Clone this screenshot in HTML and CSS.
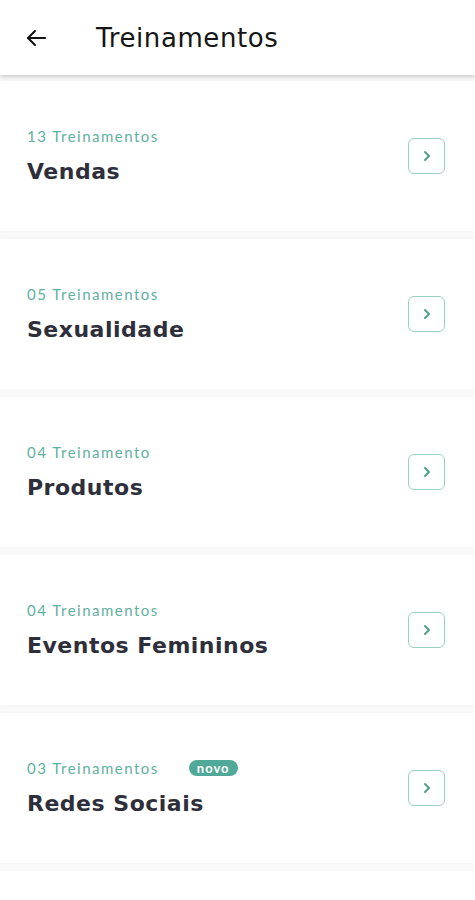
FILE: index.html
```html
<!DOCTYPE html>
<html lang="pt-BR">
<head>
    <meta charset="UTF-8">
    <meta name="viewport" content="width=475, initial-scale=1.0">
    <title>Treinamentos</title>
    <link rel="stylesheet" href="styles.css">
</head>
<body>
    <header class="topbar">
        <a href="#" class="back-btn" aria-label="Voltar">
            <svg width="24" height="24" viewBox="0 0 24 24" fill="none" stroke="#111" stroke-width="2" stroke-linecap="round" stroke-linejoin="round">
                <path d="M21 12H4"/>
                <path d="M11 5l-7 7 7 7"/>
            </svg>
        </a>
        <h1>Treinamentos</h1>
    </header>

    <main class="list">
        <!-- Categorias de treinamento -->
        <a href="#" class="card">
            <div class="card-text">
                <p class="count">13 Treinamentos</p>
                <h2>Vendas</h2>
            </div>
            <span class="go-btn">
                <svg width="14" height="14" viewBox="0 0 14 14" fill="none" stroke="#4f9f8e" stroke-width="2" stroke-linecap="round" stroke-linejoin="round"><path d="M5 3l4 4-4 4"/></svg>
            </span>
        </a>
        <a href="#" class="card">
            <div class="card-text">
                <p class="count">05 Treinamentos</p>
                <h2>Sexualidade</h2>
            </div>
            <span class="go-btn">
                <svg width="14" height="14" viewBox="0 0 14 14" fill="none" stroke="#4f9f8e" stroke-width="2" stroke-linecap="round" stroke-linejoin="round"><path d="M5 3l4 4-4 4"/></svg>
            </span>
        </a>
        <a href="#" class="card">
            <div class="card-text">
                <p class="count">04 Treinamento</p>
                <h2>Produtos</h2>
            </div>
            <span class="go-btn">
                <svg width="14" height="14" viewBox="0 0 14 14" fill="none" stroke="#4f9f8e" stroke-width="2" stroke-linecap="round" stroke-linejoin="round"><path d="M5 3l4 4-4 4"/></svg>
            </span>
        </a>
        <a href="#" class="card">
            <div class="card-text">
                <p class="count">04 Treinamentos</p>
                <h2>Eventos Femininos</h2>
            </div>
            <span class="go-btn">
                <svg width="14" height="14" viewBox="0 0 14 14" fill="none" stroke="#4f9f8e" stroke-width="2" stroke-linecap="round" stroke-linejoin="round"><path d="M5 3l4 4-4 4"/></svg>
            </span>
        </a>
        <a href="#" class="card">
            <div class="card-text">
                <p class="count">03 Treinamentos <span class="badge">novo</span></p>
                <h2>Redes Sociais</h2>
            </div>
            <span class="go-btn">
                <svg width="14" height="14" viewBox="0 0 14 14" fill="none" stroke="#4f9f8e" stroke-width="2" stroke-linecap="round" stroke-linejoin="round"><path d="M5 3l4 4-4 4"/></svg>
            </span>
        </a>
    </main>
</body>
</html>
```

FILE: styles.css
```css
body, html {
    margin: 0;
    padding: 0;
    width: 100%;
    min-height: 100%;
    font-family: 'Lato', 'Noto Sans', sans-serif;
    background-color: #fff;
}
.topbar {
    height: 75px;
    background-color: #fff;
    display: flex;
    align-items: center;
    padding: 0 24px;
    box-sizing: border-box;
    box-shadow: 0 2px 4px rgba(0, 0, 0, 0.18);
    position: relative;
    z-index: 1;
}
.back-btn {
    display: flex;
    width: 24px;
    height: 24px;
}
.topbar h1 {
    margin: 0 0 0 48px;
    font-family: 'DejaVu Sans', sans-serif;
    font-size: 26px;
    font-weight: 400;
    letter-spacing: 0.6px;
    color: #151515;
}
.list {
    display: flex;
    flex-direction: column;
    gap: 8px;
    padding: 6px 0 8px 0;
    background-color: #f9f9f9;
}
.card {
    height: 150px;
    background-color: #fff;
    display: flex;
    align-items: center;
    justify-content: space-between;
    padding: 0 30px 0 27px;
    box-sizing: border-box;
    text-decoration: none;
    box-shadow: 0 0 3px rgba(0, 0, 0, 0.04);
}
.card-text {
    display: flex;
    flex-direction: column;
    margin-top: -1px;
}
.count {
    margin: 0;
    font-family: 'Lato', sans-serif;
    font-size: 15px;
    color: #5fb19f;
    letter-spacing: 1.5px;
    display: flex;
    align-items: center;
}
.badge {
    margin-left: 30px;
    background-color: #4fa898;
    color: #fff;
    font-size: 13px;
    font-weight: 700;
    letter-spacing: 1px;
    padding: 0 8px;
    height: 16px;
    line-height: 16px;
    border-radius: 8px;
}
.card h2 {
    margin: 14px 0 0 0;
    font-family: 'DejaVu Sans', sans-serif;
    font-size: 22px;
    font-weight: 700;
    letter-spacing: 0.5px;
    color: #2e2f3b;
}
.go-btn {
    width: 37px;
    height: 36px;
    box-sizing: border-box;
    border: 1.5px solid #98d1c4;
    border-radius: 6px;
    display: flex;
    align-items: center;
    justify-content: center;
}
```
